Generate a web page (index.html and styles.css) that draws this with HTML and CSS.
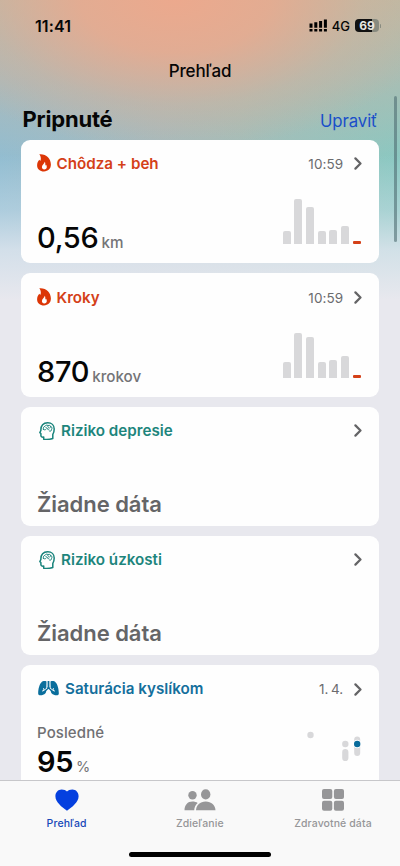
FILE: index.html
```html
<!DOCTYPE html>
<html lang="sk">
<head>
<meta charset="utf-8">
<meta name="viewport" content="width=device-width, initial-scale=1">
<title>Prehľad</title>
<link rel="stylesheet" href="styles.css">
</head>
<body>
<svg class="defs" aria-hidden="true">
  <symbol id="flame" viewBox="0 0 14 18">
    <path fill="#dc3606" fill-rule="evenodd" d="M2.300.2C9-.4 13.900 4 13.900 10.600c0 4.300-2.900 6.800-6.900 6.800S.1 15 .1 11.400C.1 9.200.9 7.300 2.300 5.800c.4.700.8.900 1.200.9C4.200 4.500 3.800 2.100 2.300.2ZM7.700 7.600c.2 2-2.800 3-2.800 5.400 0 1.600 1 2.500 2.400 2.500s2.500-.9 2.500-2.500c0-.9-.3-1.600-.7-2.200-.2.500-.4.700-.8.800.2-1.600 0-3-.6-4Z"/>
  </symbol>
  <symbol id="head" viewBox="0 0 16 18">
    <g fill="none" stroke="#16827a" stroke-width="1.500" stroke-linejoin="round" stroke-linecap="round">
      <path d="M4.700 17.200v-2.100c-1.800.2-2.700-.2-2.800-1.600v-2L.8 10.700l1.100-2.300C1.600 3.600 4.400.8 8.700.8c3.900 0 6.500 2.700 6.500 6.200 0 2.500-.6 4.100-1.400 5.400v4.100c-2.700.8-6.400 1.100-9.100.7Z"/>
      <path stroke-width="1" d="M4.300 7.300C4 5.500 4.900 4.400 6.100 4.300 6.500 3 8.200 2.800 9 3.700c1-.8 2.400-.3 2.700.8 1.200.4 1.600 1.800.9 2.800.2 1.200-.8 2.100-1.900 1.900M4.300 7.300c.8.800 2 .7 2.500.2M9 3.700c-.4.800-.2 1.400.4 1.800M7 5.600c1 .1 1.300.8 1 1.500.9-.4 1.900 0 2 .9M11.700 4.500c0 .8-.4 1.300-1 1.500"/>
    </g>
  </symbol>
  <symbol id="lungs" viewBox="0 0 21 15">
    <path fill="#0a6e9c" d="M8.500.4 8.200 10.200c-.2 2-1.300 2.800-3.100 3.500-1.700.7-4.700 1.100-4.900-1C0 8.500 1.400 3.300 3.300 1.400 4.400.3 6.300-.3 8.500.4ZM12.500.4l.3 9.800c.2 2 1.300 2.800 3.100 3.500 1.700.7 4.700 1.100 4.900-1 .2-4.200-1.200-9.400-3.100-11.300C16.600.3 14.700-.3 12.500.4Z"/>
    <path fill="none" stroke="#0a6e9c" stroke-width="1.800" d="M10.500 0v6.500L7.300 9.500M10.500 6.500l3.200 3"/>
    <path fill="none" stroke="#fff" stroke-width=".9" stroke-linecap="round" d="M8.800 7.200 5.700 9.500M5.600 7.500l.4 1.700-1.600.8M12.200 7.200l3.100 2.300M15.400 7.500l-.4 1.700 1.600.8"/>
  </symbol>
  <symbol id="chevron" viewBox="0 0 8 13">
    <path fill="none" stroke="#646466" stroke-width="2.200" stroke-linecap="round" stroke-linejoin="round" d="M1.400 1.400 6.500 6.500l-5.100 5.100"/>
  </symbol>
</svg>
<div class="screen">
  <header class="status">
    <span class="clock">11:41</span>
    <span class="indicators">
      <svg class="signal" viewBox="0 0 19 13">
        <path d="M.5 4.500h3v4.300h-3zM5.300 3.300h3v5.500h-3zM10.100 2.100h3v6.700h-3zM14.900.4h3v8.400h-3z"/>
        <path d="M.5 9.900h3v2.500h-3zM5.300 9.900h3v2.500h-3zM10.100 9.900h3v2.500h-3zM14.900 9.900h3v2.500h-3z"/>
      </svg>
      <span class="network">4G</span>
      <span class="battery">69</span>
    </span>
  </header>
  <h1 class="title">Prehľad</h1>
  <main class="content">
    <div class="section-head"><h2>Pripnuté</h2><a class="edit">Upraviť</a></div>
    <section class="card tall">
      <div class="card-head red"><svg class="flame"><use href="#flame"/></svg><h3>Chôdza + beh</h3><time>10:59</time><svg class="chevron"><use href="#chevron"/></svg></div>
      <div class="card-body">
        <p class="value">0,56<span class="unit">km</span></p>
        <div class="bars"><i style="height:13px"></i><i style="height:45px"></i><i style="height:37px"></i><i style="height:13px"></i><i style="height:14px"></i><i style="height:18px"></i><i class="today"></i></div>
      </div>
    </section>
    <section class="card tall">
      <div class="card-head red"><svg class="flame"><use href="#flame"/></svg><h3>Kroky</h3><time>10:59</time><svg class="chevron"><use href="#chevron"/></svg></div>
      <div class="card-body">
        <p class="value">870<span class="unit">krokov</span></p>
        <div class="bars"><i style="height:16px"></i><i style="height:45px"></i><i style="height:41px"></i><i style="height:16px"></i><i style="height:18px"></i><i style="height:22px"></i><i class="today"></i></div>
      </div>
    </section>
    <section class="card short">
      <div class="card-head teal"><svg class="head"><use href="#head"/></svg><h3>Riziko depresie</h3><svg class="chevron"><use href="#chevron"/></svg></div>
      <p class="empty">Žiadne dáta</p>
    </section>
    <section class="card short">
      <div class="card-head teal"><svg class="head"><use href="#head"/></svg><h3>Riziko úzkosti</h3><svg class="chevron"><use href="#chevron"/></svg></div>
      <p class="empty">Žiadne dáta</p>
    </section>
    <section class="card oxygen">
      <div class="card-head blue"><svg class="lungs"><use href="#lungs"/></svg><h3>Saturácia kyslíkom</h3><time>1. 4.</time><svg class="chevron"><use href="#chevron"/></svg></div>
      <div class="oxygen-body">
        <div><p class="latest">Posledné</p><p class="value">95<span class="unit percent">%</span></p></div>
        <svg class="dots" viewBox="0 0 54 28">
          <g fill="#d8d8da"><circle cx="3.500" cy="4" r="3.200"/><circle cx="38.300" cy="13" r="3.200"/><rect x="35.200" y="18" width="6.200" height="12" rx="3.100"/><rect x="47.200" y="5.500" width="6" height="19.500" rx="3"/></g>
          <circle cx="50.200" cy="13" r="4.200" fill="#fff"/><circle cx="50.200" cy="13" r="3.200" fill="#086b9b"/>
        </svg>
      </div>
    </section>
  </main>
  <nav class="tabs">
    <a class="tab active"><svg class="heart" viewBox="0 0 24 22"><path d="M12 21.700C7 18.200.4 13 .4 7.200.4 3.200 3.100.4 6.600.4 9 .4 11 1.300 12 2.500 13 1.300 15 .4 17.400.4c3.500 0 6.200 2.800 6.200 6.800 0 5.800-6.600 11-11.600 14.500Z"/></svg><span>Prehľad</span></a>
    <a class="tab share"><svg class="people" viewBox="0 0 32 22"><circle cx="8.500" cy="6.300" r="4.200"/><path d="M.5 21.300c0-5.500 3.200-8.900 8-8.900 2 0 3.800.5 5.200 1.500-2.200 1.700-3.400 4.300-3.500 7.400Z"/><ellipse cx="21.700" cy="5.400" rx="4.700" ry="5.100"/><path d="M12 21.300c.2-5.300 4-8.900 9.700-8.900s9.500 3.600 9.800 8.900Z"/></svg><span>Zdieľanie</span></a>
    <a class="tab data"><svg class="grid" viewBox="0 0 22 22"><rect width="10.300" height="10" rx="2"/><rect x="11.900" width="10.100" height="10" rx="2"/><rect y="11.700" width="10.300" height="10" rx="2"/><rect x="11.900" y="11.700" width="10.100" height="10" rx="2"/></svg><span>Zdravotné dáta</span></a>
    <div class="home"></div>
  </nav>
  <div class="scrollbar"></div>
</div>
</body>
</html>
```
FILE: styles.css
```css
* { box-sizing: border-box; margin: 0; padding: 0; }
body { font-family: Inter, "Liberation Sans", sans-serif; color: #060606; }
.defs { position: absolute; width: 0; height: 0; }
.screen {
  position: relative; width: 400px; height: 866px; overflow: hidden;
  display: flex; flex-direction: column;
  background:
    linear-gradient(180deg, rgba(232,232,238,0) 155px, rgba(214,228,240,.4) 210px, rgba(222,229,238,.85) 250px, #e8e8ee 300px),
    radial-gradient(ellipse 270px 150px at 175px 0, rgba(238,168,140,.95) 0%, rgba(236,169,141,.8) 35%, rgba(220,175,150,.35) 70%, rgba(200,180,160,0) 100%),
    linear-gradient(180deg, rgba(196,183,160,.85) 0, rgba(186,184,172,.65) 75px, rgba(160,190,190,0) 160px),
    linear-gradient(90deg, #92bdd1 0%, #a3bbc0 40%, #a0bfbc 60%, #8ac8c1 100%);
}
.status { height: 51px; padding: 0 21px 0 35px; display: flex; align-items: center; justify-content: space-between; flex: none; }
.clock { font-size: 16px; font-weight: 600; letter-spacing: .1px; }
.indicators { display: flex; align-items: center; }
.signal { width: 19px; height: 13px; margin-right: 4px; }
.network { font-size: 13px; font-weight: 500; margin-right: 5px; }
.battery { position: relative; width: 24px; height: 13px; border-radius: 4px; background: linear-gradient(90deg, #111 70%, #888b80 70%); color: #e8e8e4; font-size: 12px; line-height: 13px; font-weight: 700; text-align: center; }
.battery::after { content: ""; position: absolute; right: -2px; top: 4.500px; width: 1px; height: 4px; background: #888b80; border-radius: 1px; }
.title { flex: none; height: 40px; line-height: 40px; text-align: center; font-size: 17px; font-weight: 550; letter-spacing: -.15px; }
.content { flex: 1; min-height: 0; overflow: hidden; padding: 0 20.700px 0 20.500px; display: flex; flex-direction: column; }
.section-head { height: 48.700px; flex: none; display: flex; justify-content: space-between; align-items: baseline; padding: 14px 2px 0; }
.section-head h2 { font-size: 22px; line-height: 28px; font-weight: 700; letter-spacing: -.2px; }
.edit { font-size: 16.800px; color: #1a4fc9; letter-spacing: -.1px; }
.card { flex: none; background: #fefefe; border-radius: 9px; padding: 0 16.500px; margin-bottom: 10.200px; display: flex; flex-direction: column; }
.tall { height: 123.400px; }
.short { height: 119px; }
.oxygen { height: 140px; }
.card-head { height: 47.500px; flex: none; display: flex; align-items: center; }
.card-head h3 { font-size: 15.200px; font-weight: 560; letter-spacing: 0; white-space: nowrap; }
.red { color: #d44018; } .teal { color: #1d857c; } .blue { color: #146f9c; }
.flame { width: 14px; height: 18px; margin-right: 5.500px; }
.head { width: 16px; height: 18px; margin: 0 6px 0 2px; }
.lungs { width: 21px; height: 15px; margin: 0 6px 0 1px; }
.card-head time { margin-left: auto; font-size: 13.500px; color: #6b6b6e; letter-spacing: .1px; word-spacing: -1.500px; padding-top: 1px; }
.chevron { width: 8px; height: 13px; margin-left: auto; margin-right: 1px; }
time + .chevron { margin-left: 10.500px; margin-top: 1px; }
.card-body { flex: 1; display: flex; justify-content: space-between; align-items: flex-end; padding-bottom: 7px; }
.value { font-size: 29px; line-height: 36px; font-weight: 600; letter-spacing: -.4px; white-space: nowrap; }
.card-body .value { font-weight: 550; line-height: 26px; letter-spacing: -.3px; }
.unit { font-size: 15.200px; font-weight: 500; color: #747477; letter-spacing: 0; margin-left: 3px; }
.bars { display: flex; align-items: flex-end; gap: 3.700px; padding-bottom: 12px; margin-right: 2px; }
.bars i { width: 8px; border-radius: 2px 2px 0 0; background: #d8d8da; }
.bars .today { height: 3px; background: #d44018; border-radius: 1px; }
.empty { margin-top: auto; padding-bottom: 8px; font-size: 22px; line-height: 28px; font-weight: 600; color: #656567; letter-spacing: -.05px; }
.oxygen-body { display: flex; justify-content: space-between; padding-top: 10.500px; }
.latest { font-size: 15px; line-height: 20px; font-weight: 500; color: #707073; letter-spacing: .1px; }
.oxygen .value { line-height: 37px; }
.unit.percent { font-size: 14.500px; font-weight: 400; margin-left: 3px; }
.dots { width: 54px; height: 28px; margin: 8px 2px 0 0; overflow: visible; }
.tabs { position: relative; flex: none; height: 86px; border-top: 1px solid #c7c7ca; background: #f9f9f9; display: grid; grid-template-columns: repeat(3, 133.200px); }
.tab { display: flex; flex-direction: column; align-items: center; padding-top: 8px; color: #969698; font-size: 10.500px; font-weight: 500; letter-spacing: .1px; }
.tab svg { fill: #969698; height: 22px; margin-bottom: 6px; }
.tab span { line-height: 13px; }
.heart { width: 24px; } .people { width: 32px; } .grid { width: 22px; }
.active { color: #1748b8; }
.tab.active svg { fill: #0540df; }
.home { position: absolute; left: 129px; top: 71px; width: 142px; height: 5px; border-radius: 3px; background: #000; }
.scrollbar { position: absolute; left: 394px; top: 96px; width: 3px; height: 146px; border-radius: 2px; background: rgba(80,110,115,.6); }
```
